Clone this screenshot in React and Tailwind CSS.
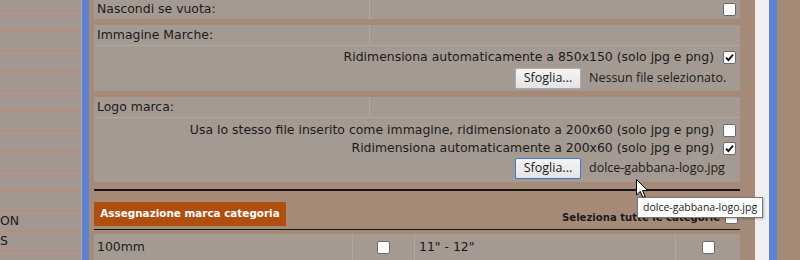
import React from "react";

function Box({ checked = false, className = "" }) {
  return (
    <span
      className={
        "inline-flex h-[13px] w-[13px] shrink-0 items-center justify-center rounded-[2px] border border-[#6b6b6b] bg-white " +
        className
      }
    >
      {checked && (
        <svg width="9" height="9" viewBox="0 0 9 9">
          <path d="M1 4.6 L3.4 7 L8 1.6" fill="none" stroke="#111" strokeWidth="1.9" />
        </svg>
      )}
    </span>
  );
}

function FileInput({ name, focused = false }) {
  return (
    <div className="flex w-[221px] items-center font-['Open_Sans',sans-serif] text-[12.5px] text-[#1a1a1a]">
      <span
        className={
          "flex h-[21px] w-[66px] items-center justify-center rounded-[2px] border bg-gradient-to-b from-[#f4f4f4] to-[#e4e4e4] " +
          (focused ? "border-[#3d7bd0]" : "border-[#adadad]")
        }
      >
        Sfoglia...
      </span>
      <span className="ml-[8px] whitespace-nowrap">{name}</span>
    </div>
  );
}

function OptionRow({ text, checked, className = "" }) {
  return (
    <div className={"flex h-[16px] items-center justify-end gap-[9px] " + className}>
      <span className="whitespace-nowrap">{text}</span>
      <Box checked={checked} />
    </div>
  );
}

export default function App() {
  const leftRows = Array.from({ length: 13 });
  return (
    <div className="relative flex h-[260px] w-[800px] overflow-hidden bg-[#a68a78] font-['DejaVu_Sans',sans-serif] text-[12.45px] text-[#1a1a1a]">
      {/* left column */}
      <div className="flex w-[82px] shrink-0 flex-col bg-[#a4978f] border-r border-[#b5a79e]">
        <div className="h-[10px] shrink-0" />
        {leftRows.map((_, i) => (
          <div
            key={i}
            className="flex h-[20px] shrink-0 items-center border-t-2 border-[#b58d7a] pl-0 leading-none"
          >
            {i === 10 ? "ON" : i === 11 ? "S" : ""}
          </div>
        ))}
      </div>
      {/* blue bar */}
      <div className="w-[7px] shrink-0 bg-[#5b82d3]" />

      {/* main */}
      <div className="flex w-[666px] shrink-0 flex-col pl-[5px] pr-[15px]">
        {/* Nascondi se vuota */}
        <div className="flex h-[19px] shrink-0 bg-[#a59a92]">
          <div className="flex w-[276px] items-center border-r border-[#b2a69e] pl-[3px]">
            Nascondi se vuota:
          </div>
          <div className="flex flex-1 items-center justify-end pr-[4px]">
            <Box />
          </div>
        </div>
        <div className="h-[6px] shrink-0" />

        {/* Immagine Marche */}
        <div className="flex shrink-0 flex-col bg-[#a59a92]">
          <div className="flex h-[21px] border-b border-[#b2a69e]">
            <div className="flex w-[276px] items-center border-r border-[#b2a69e] pl-[3px]">
              Immagine Marche:
            </div>
            <div className="flex-1" />
          </div>
          <div className="flex h-[45px] flex-col items-end pr-[4px]">
            <OptionRow
              className="mt-[3px]"
              text="Ridimensiona automaticamente a 850x150 (solo jpg e png)"
              checked
            />
            <div className="mt-[3px]">
              <FileInput name="Nessun file selezionato." />
            </div>
          </div>
        </div>
        <div className="h-[6px] shrink-0" />

        {/* Logo marca */}
        <div className="flex shrink-0 flex-col bg-[#a59a92]">
          <div className="flex h-[21px] border-b border-[#b2a69e]">
            <div className="flex w-[276px] items-center border-r border-[#b2a69e] pl-[3px]">
              Logo marca:
            </div>
            <div className="flex-1" />
          </div>
          <div className="flex h-[64px] flex-col items-end pr-[4px]">
            <OptionRow
              className="mt-[4px]"
              text="Usa lo stesso file inserito come immagine, ridimensionato a 200x60 (solo jpg e png)"
            />
            <OptionRow
              className="mt-[2px]"
              text="Ridimensiona automaticamente a 200x60 (solo jpg e png)"
              checked
            />
            <div className="mt-[2px]">
              <FileInput name="dolce-gabbana-logo.jpg" focused />
            </div>
          </div>
        </div>

        <div className="h-[7px] shrink-0" />
        <div className="h-[2px] shrink-0 bg-[#151515]" />
        <div className="h-[11px] shrink-0" />

        {/* Assegnazione */}
        <div className="flex h-[24px] shrink-0 items-center justify-between">
          <div className="flex h-[24px] w-[192px] items-center justify-center bg-[#b04e10] text-[10.4px] font-bold text-white">
            Assegnazione marca categoria
          </div>
          <div className="mt-[7px] flex items-center gap-[5px] pr-[2px] text-[10.1px] font-bold">
            <span className="whitespace-nowrap">Seleziona tutte le categorie</span>
            <Box />
          </div>
        </div>
        <div className="h-[3px] shrink-0" />
        <div className="h-[1px] shrink-0 bg-[#151515]" />
        <div className="h-[4px] shrink-0" />

        {/* table row */}
        <div className="flex h-[27px] shrink-0 bg-[#a59a92]">
          <div className="flex w-[259px] items-center border-r border-[#b2a69e] pl-[3px]">
            100mm
          </div>
          <div className="flex w-[62px] items-center justify-center border-r border-[#b2a69e]">
            <Box />
          </div>
          <div className="flex w-[261px] items-center border-r border-[#b2a69e] pl-[4px]">
            11" - 12"
          </div>
          <div className="flex flex-1 items-center justify-center">
            <Box />
          </div>
        </div>
      </div>

      {/* right strips */}
      <div className="w-[14px] shrink-0 bg-[#efefef]" />
      <div className="w-[8px] shrink-0 bg-[#5b82d3]" />
      <div className="flex-1 bg-[#a68a78]" />

      {/* cursor */}
      <svg
        className="absolute left-[636px] top-[179px]"
        width="13"
        height="20"
        viewBox="0 0 13 20"
      >
        <path
          d="M0.5 0.5 L0.5 16 L4.3 12.4 L6.9 18.3 L9.1 17.4 L6.6 11.6 L11.6 11.6 Z"
          fill="#fff"
          stroke="#000"
          strokeWidth="1"
          strokeLinejoin="round"
        />
      </svg>

      {/* tooltip */}
      <div className="absolute left-[637px] top-[197px] flex h-[21px] w-[126px] items-center whitespace-nowrap border border-[#767676] bg-white pl-[5px] font-['Open_Sans',sans-serif] text-[10.5px] text-[#222] shadow-[1px_1px_2px_rgba(0,0,0,0.25)]">
        dolce-gabbana-logo.jpg
      </div>
    </div>
  );
}
